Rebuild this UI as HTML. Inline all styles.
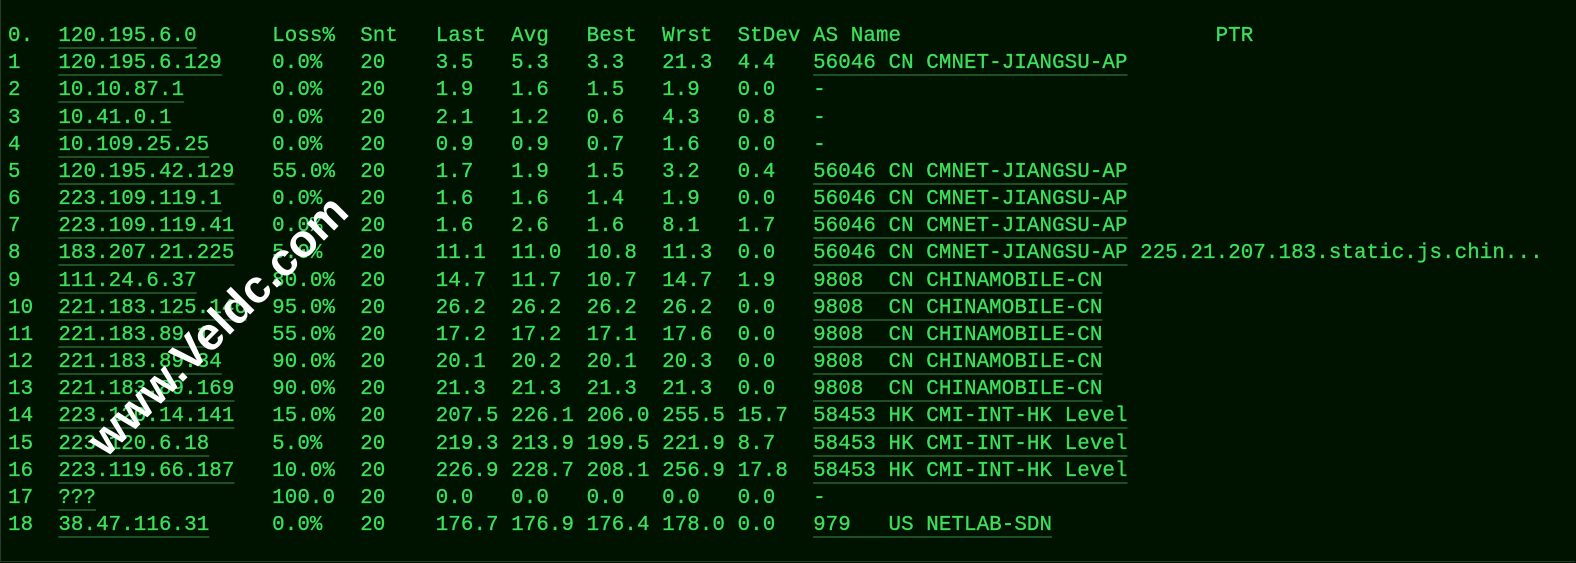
<!DOCTYPE html>
<html><head><meta charset="utf-8"><style>
html,body{margin:0;padding:0;}
body{width:1576px;height:563px;background:#001300;overflow:hidden;position:relative;}
.frame{position:absolute;left:0;top:0;width:1575px;height:562px;border-left:1px solid #2a3a2a;border-bottom:1px solid #2a3a2a;box-sizing:border-box;}
pre{position:absolute;left:8px;top:23px;margin:0;font-family:"Liberation Mono","DejaVu Sans Mono",monospace;font-size:20.83px;letter-spacing:0.08px;line-height:27.17px;color:#3ce05b;-webkit-text-stroke:0.3px #3ce05b;}
u{text-decoration:underline;text-decoration-color:#1f4f26;text-decoration-thickness:2px;text-underline-offset:6px;-webkit-text-stroke:0.3px #3ce05b;}
.wm{position:absolute;left:217px;top:325px;transform:translate(-50%,-50%) rotate(-45deg);font-family:"Liberation Sans",sans-serif;font-weight:bold;font-size:46px;color:#fff;white-space:nowrap;}
</style></head><body><div class="frame"></div>
<pre>0.  <u>120.195.6.0</u>      Loss%  Snt   Last  Avg   Best  Wrst  StDev AS Name                         PTR
1   <u>120.195.6.129</u>    0.0%   20    3.5   5.3   3.3   21.3  4.4   <u>56046 CN CMNET-JIANGSU-AP</u>
2   <u>10.10.87.1</u>       0.0%   20    1.9   1.6   1.5   1.9   0.0   -
3   <u>10.41.0.1</u>        0.0%   20    2.1   1.2   0.6   4.3   0.8   -
4   <u>10.109.25.25</u>     0.0%   20    0.9   0.9   0.7   1.6   0.0   -
5   <u>120.195.42.129</u>   55.0%  20    1.7   1.9   1.5   3.2   0.4   <u>56046 CN CMNET-JIANGSU-AP</u>
6   <u>223.109.119.1</u>    0.0%   20    1.6   1.6   1.4   1.9   0.0   <u>56046 CN CMNET-JIANGSU-AP</u>
7   <u>223.109.119.41</u>   0.0%   20    1.6   2.6   1.6   8.1   1.7   <u>56046 CN CMNET-JIANGSU-AP</u>
8   <u>183.207.21.225</u>   5.0%   20    11.1  11.0  10.8  11.3  0.0   <u>56046 CN CMNET-JIANGSU-AP</u> 225.21.207.183.static.js.chin...
9   <u>111.24.6.37</u>      80.0%  20    14.7  11.7  10.7  14.7  1.9   <u>9808  CN CHINAMOBILE-CN</u>
10  <u>221.183.125.146</u>  95.0%  20    26.2  26.2  26.2  26.2  0.0   <u>9808  CN CHINAMOBILE-CN</u>
11  <u>221.183.89.1</u>     55.0%  20    17.2  17.2  17.1  17.6  0.0   <u>9808  CN CHINAMOBILE-CN</u>
12  <u>221.183.89.34</u>    90.0%  20    20.1  20.2  20.1  20.3  0.0   <u>9808  CN CHINAMOBILE-CN</u>
13  <u>221.183.89.169</u>   90.0%  20    21.3  21.3  21.3  21.3  0.0   <u>9808  CN CHINAMOBILE-CN</u>
14  <u>223.120.14.141</u>   15.0%  20    207.5 226.1 206.0 255.5 15.7  <u>58453 HK CMI-INT-HK Level</u>
15  <u>223.120.6.18</u>     5.0%   20    219.3 213.9 199.5 221.9 8.7   <u>58453 HK CMI-INT-HK Level</u>
16  <u>223.119.66.187</u>   10.0%  20    226.9 228.7 208.1 256.9 17.8  <u>58453 HK CMI-INT-HK Level</u>
17  <u>???</u>              100.0  20    0.0   0.0   0.0   0.0   0.0   -
18  <u>38.47.116.31</u>     0.0%   20    176.7 176.9 176.4 178.0 0.0   <u>979   US NETLAB-SDN</u>
</pre>
<div class="wm">www.Veldc.com</div>
</body></html>
